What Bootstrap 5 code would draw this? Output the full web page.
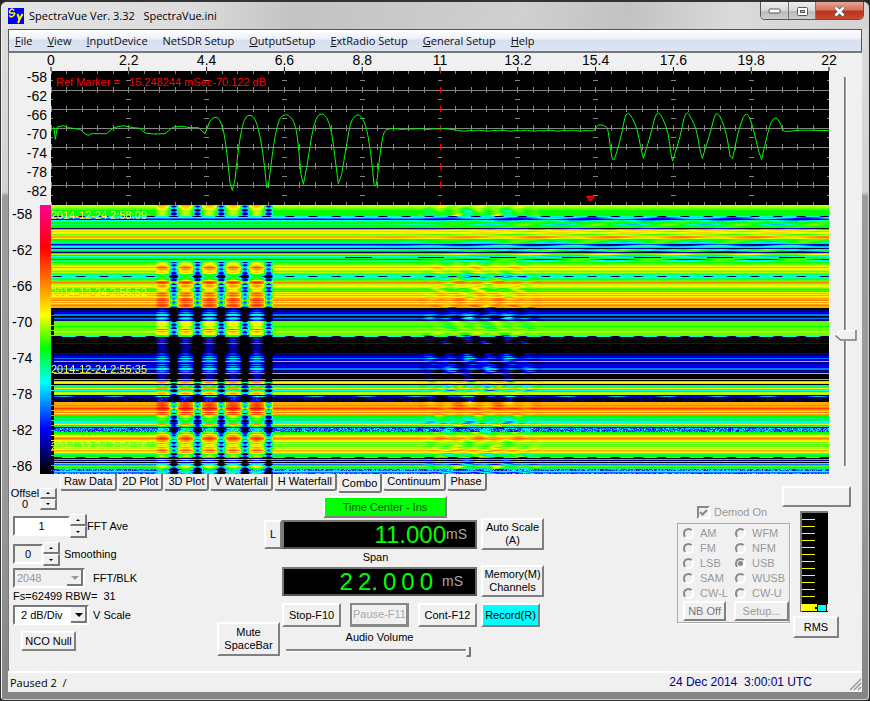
<!DOCTYPE html>
<html lang="en">
<head>
<meta charset="utf-8">
<meta name="viewport" content="width=device-width, initial-scale=1">
<title>SpectraVue Ver. 3.32 SpectraVue.ini</title>
<link href="https://cdn.jsdelivr.net/npm/bootstrap@5.3.0/dist/css/bootstrap.min.css" rel="stylesheet">
<style>
  body { font: 11px/13px "Liberation Sans", Arial, sans-serif; color: #000; background: #222; }
  .win { min-height: 100vh; padding: 0 7px 8px 7px; border: 1px solid #333; border-width: 2px 1px 1px; border-radius: 7px 7px 4px 4px; background: linear-gradient(#dedede 0, #d2d2d2 190px, #9c9c9c 194px, #9a9a9a 480px, #858585 100%); box-shadow: inset 1px 1px 0 #f4f4f4, inset -1px -1px 0 #ccc; }
  .ui-font { font-family: "Open Sans", "Noto Sans", sans-serif; font-size: 11px; }
  .titlebar { height: 27px; background: linear-gradient(100deg, #e4e4e4 0, #dcdcdc 22%, #c3c3c3 34%, #d0d0d0 60%, #c2c2c2 72%, #dadada 84%, #d4d4d4 100%); margin: 0 -6px; padding-left: 6px; border-radius: 6px 6px 0 0; }
  .caption-btns { border: 1px solid #555; border-top: 0; border-radius: 0 0 5px 5px; overflow: hidden; height: 18px; }
  .caption-btns button { border: 0; border-right: 1px solid #777; background: linear-gradient(#eee, #d8d8d8 48%, #b9b9b9 50%, #d0d0d0); padding: 0; height: 18px; width: 27px; display: flex; align-items: center; justify-content: center; }
  .caption-btns .first { width: 28px; }
  .caption-btns .shut { width: 47px; border-right: 0; background: linear-gradient(#e6a595, #d5705a 45%, #b9331a 50%, #c94a33); }
  .menubar { height: 22px; border: 1px solid #555; border-width: 1px 1px 0; background: linear-gradient(#fff, #eef1f9 40%, #d8dff1 50%, #dde4f4); padding-left: 6px; gap: 15px; }
  .menubar a { color: #111; text-decoration: none; white-space: nowrap; }
  .client { background: #f0f0f0; border-left: 1px solid #777; border-top: 2px solid #777; flex: 1 0 auto; }
  .gutter { width: 42px; flex: none; font-size: 14px; }
  .side { width: 33px; flex: none; }
  .axis-top { height: 18px; width: 100%; overflow: visible; font-size: 14px; display: block; }
  .lvl { line-height: 19px; height: 134px; margin-top: -3px; text-align: right; padding-right: 4px; }
  .lvl2 { line-height: 36px; height: 269px; margin-top: -9px; padding-left: 3px; width: 31px; }
  .lvl div, .lvl2 div { white-space: nowrap; }
  .scope { height: 134px; background: #000; }
  .scope svg, .fall canvas { display: block; width: 100%; height: 100%; }
  .readout { left: 5px; top: 5px; color: #f00; white-space: pre; }
  .fall { height: 269px; }
  .fall canvas { image-rendering: pixelated; }
  .stamp { left: 0; font-size: 11px; color: #ff4; white-space: nowrap; line-height: 12px; }
  .stamp.faint { color: #e8ff30; }
  .palette { width: 11px; height: 269px; background: linear-gradient(#ff0096, #f00 16%, #ff8000 29%, #ff0 41%, #0f0 53%, #0ff 66%, #00f 83%, #000 99%); }
  .vslide { writing-mode: vertical-lr; appearance: none; background: none; width: 24px; height: 389px; margin: 8px 0 0 4px; }
  .vslide::-webkit-slider-runnable-track { width: 3px; height: 100%; background: #999; border-left: 1px solid #777; border-right: 1px solid #fff; }
  .vslide::-webkit-slider-thumb { appearance: none; width: 22px; height: 11px; margin-left: -10px; background: url("data:image/svg+xml,%3Csvg xmlns='http://www.w3.org/2000/svg' width='22' height='11'%3E%3Cpath d='M1 5L6 .5H21.500V10.500H6Z' fill='%23f0f0f0' stroke='%23fff'/%3E%3Cpath d='M.5 5.500L5.500 10H21V0' fill='none' stroke='%23777' stroke-width='1.500'/%3E%3C/svg%3E"); }
  .hslide { appearance: none; background: none; width: 185px; height: 12px; margin: 0; padding: 0; display: block; }
  .hslide::-webkit-slider-runnable-track { height: 3px; background: #888; border-bottom: 1px solid #fff; }
  .hslide::-webkit-slider-thumb { appearance: none; width: 5px; height: 10px; margin-top: -2px; background: #f0f0f0; border: 1px solid #777; border-width: 0 2px 2px 1px; border-left-color: #fff; }
  .panel { display: grid; grid-template-columns: 208px 324px 1fr; }
  .panel > * { grid-row: 1; }
  .view-tabs { grid-column: 1 / -1; align-self: start; justify-self: start; margin-left: 51px; gap: 1px; --bs-nav-link-padding-x: 3px; --bs-nav-link-padding-y: 0; z-index: 1; }
  .view-tabs .nav-link { font-size: 11px; line-height: 15px; color: #000; height: 17px; background: #f0f0f0; border: 1px solid; border-color: #f0f0f0 #777 #777 #fff; border-width: 0 2px 2px 1px; border-radius: 0 0 3px 3px; white-space: nowrap; }
  .view-tabs .nav-link.active { height: 19px; line-height: 19px; color: #000; }
  .btn-cls, .btn-cls:hover { --bs-btn-border-radius: 0; --bs-btn-padding-x: 1px; --bs-btn-padding-y: 0; --bs-btn-font-size: 11px; --bs-btn-line-height: 13px; --bs-btn-color: #000; --bs-btn-hover-color: #000; --bs-btn-disabled-color: #999; --bs-btn-disabled-opacity: 1; background: #f0f0f0; border: 2px solid; border-color: #fff #808080 #808080 #fff; white-space: nowrap; }
  .btn-cls:disabled { background: #f0f0f0; border-color: #fff #808080 #808080 #fff; }
  .btn-cls.ring { border: 2px solid #888; border-right-width: 3px; border-bottom-width: 3px; color: #aaa; }
  .btn-cls.go { background: #0f0; color: #050; }
  .btn-cls.rec { background: #0ff; width: 59px; }
  .w59 { width: 59px; } .w63 { width: 63px; } .h23 { height: 24px; } .h31 { height: 32px; }
  .left-col { grid-column: 1; padding: 14px 0 0 4px; }
  .offset-row { margin-left: -3px; }
  .fieldrow { height: 24px; }
  .box-in { border: 2px solid; border-color: #777 #fff #fff #777; background: #fff; border-radius: 0; padding: 0; height: 20px; font: 11px/16px "Liberation Sans", Arial, sans-serif; color: #000; }
  select.box-in { appearance: none; padding: 0 20px 0 6px; background: #fff url("data:image/svg+xml,%3Csvg xmlns='http://www.w3.org/2000/svg' width='16' height='16'%3E%3Cpath d='M0 0H16V16H0Z' fill='%23f0f0f0'/%3E%3Cpath d='M15 0V15H0' fill='none' stroke='%23777' stroke-width='2'/%3E%3Cpath d='M4 6H12L8 10Z'/%3E%3C/svg%3E") right center no-repeat; }
  select.box-in:disabled { color: #999; opacity: 1; padding-left: 2px; background: #f0f0f0 url("data:image/svg+xml,%3Csvg xmlns='http://www.w3.org/2000/svg' width='16' height='16'%3E%3Cpath d='M0 0H16V16H0Z' fill='%23f0f0f0'/%3E%3Cpath d='M15 0V15H0' fill='none' stroke='%23777' stroke-width='2'/%3E%3Cpath d='M4 6H12L8 10Z' fill='%23999'/%3E%3C/svg%3E") right center no-repeat; }
  .spin { width: 17px; flex: none; }
  .spin button { display: flex; align-items: center; justify-content: center; height: 11px; width: 17px; padding: 0; border: 1px solid; border-color: #fff #777 #777 #fff; border-width: 1px 2px 2px 1px; background: #f0f0f0; }
  .spin button::before { content: ""; border: 2px solid transparent; border-top: 0; border-bottom-color: #000; }
  .spin button:last-child::before { border: 2px solid transparent; border-bottom: 0; border-top-color: #000; }
  .fieldrow .spin button { height: 12px; }
  .mid-col { grid-column: 2; display: grid; grid-template-columns: 65px 199px 63px; grid-template-rows: 22px 32px 15px 32px 6px 24px 29px; margin-top: 22px; align-content: start; width: 328px; }
  .lcd { width: 195px; height: 29px; background: #000; border: 2px solid; border-color: #777 #666 #555 #777; color: #0f0; font-size: 24px; line-height: 25px; }
  .lcd small { font-size: 14px; color: #aaa; }
  .right-col { grid-column: 3; display: grid; grid-template-columns: 105px 69px; justify-content: end; padding: 12px 11px 0 0; align-items: start; }
  .mode-box { width: 113px; border: 1px solid #aaa; box-shadow: 1px 1px 0 #fff; padding: 2px 0 1px 5px; color: #999; }
  .mode-box .modes { display: grid; grid-template-columns: 52px 54px; grid-auto-rows: 15px; }
  .opt { height: 15px; gap: 6px; color: #999; white-space: nowrap; }
  .opt input { appearance: none; margin: 0; width: 11px; height: 11px; border-radius: 50%; border: 2px solid; border-color: #888 #fff #fff #888; background: #f0f0f0; }
  .opt input:checked { background: radial-gradient(#888 0 2px, #f0f0f0 3px); }
  .tick { appearance: none; margin: 0; width: 13px; height: 13px; border: 2px solid; border-color: #888 #fff #fff #888; background: url("data:image/svg+xml,%3Csvg xmlns='http://www.w3.org/2000/svg' width='9' height='9'%3E%3Cpath d='M1 4L3.500 6.500L8 2' fill='none' stroke='%23888' stroke-width='2'/%3E%3C/svg%3E") center no-repeat; }
  .status { height: 21px; background: #f0f0f0; border-top: 2px solid #fff; padding-left: 2px; }
  .status .clock { font-size: 12px; color: #000080; white-space: pre; margin-right: 36px; }
</style>
</head>
<body>
<div class="win d-flex flex-column">
  <header class="titlebar d-flex justify-content-between">
    <div class="d-flex align-items-center ui-font gap-1">
      <svg width="17" height="16" viewBox="0 0 17 16" aria-hidden="true"><rect width="16" height="16" fill="#00f"/><path d="M6 2.500Q4-.500 2 2.500T4.500 5 4.500 8.500Q2 9.500 1.500 7" fill="none" stroke="#ff0" stroke-width="1.500"/><path d="M9.500 6L11.500 11.500 14.500 6M11.500 11.500L10 15" fill="none" stroke="#ff0" stroke-width="2"/></svg>
      <span class="text-nowrap">SpectraVue Ver. 3.32&nbsp;&nbsp; SpectraVue.ini</span>
    </div>
    <div class="caption-btns d-flex me-1">
      <button class="first" aria-label="Minimize"><svg width="14" height="7"><rect x="1" y="1" width="11" height="4" rx="1" fill="#fff" stroke="#556"/></svg></button>
      <button aria-label="Maximize"><svg width="13" height="11"><rect x="1.500" y="1.500" width="10" height="8" rx="1" fill="#fff" stroke="#556"/><rect x="4.500" y="4.500" width="4" height="2" fill="#bbb" stroke="#556"/></svg></button>
      <button class="shut" aria-label="Close"><svg width="13" height="11"><path d="M2.500 1.500L10.500 9.500M10.500 1.500L2.500 9.500" stroke="#556" stroke-width="4"/><path d="M2.500 1.500L10.500 9.500M10.500 1.500L2.500 9.500" stroke="#fff" stroke-width="2.500"/></svg></button>
    </div>
  </header>
  <nav class="menubar d-flex align-items-center ui-font">
    <a href="#"><u>F</u>ile</a><a href="#"><u>V</u>iew</a><a href="#"><u>I</u>nputDevice</a><a href="#">NetSDR Setup</a><a href="#"><u>O</u>utputSetup</a><a href="#"><u>E</u>xtRadio Setup</a><a href="#"><u>G</u>eneral Setup</a><a href="#"><u>H</u>elp</a>
  </nav>
  <main class="client">
    <div class="d-flex">
      <div class="flex-grow-1">
        <div class="d-flex"><div class="gutter"></div><div class="flex-grow-1"><svg class="axis-top" id="axisTop"></svg></div></div>
        <div class="d-flex">
          <div class="gutter lvl"><div>-58</div><div>-62</div><div>-66</div><div>-70</div><div>-74</div><div>-78</div><div>-82</div></div>
          <div class="flex-grow-1 scope position-relative">
            <svg viewBox="153 210 2334 402" preserveAspectRatio="none">
              <path id="gridLines" stroke="#858585" fill="none" stroke-width="3" shape-rendering="crispEdges"/>
              <path id="centerTicks" stroke="#f00" fill="none" stroke-width="3" shape-rendering="crispEdges"/>
              <path id="trace" fill="none" stroke="#0f0" stroke-width="3" stroke-linejoin="round"/>
              <path d="M1757 586L1764 584H1778L1785 587L1771 602Z" fill="#f00"/><path d="M1768 590H1774L1771 594Z"/>
            </svg>
            <div class="readout position-absolute">Ref Marker =   15.248244 mSec-70.122 dB</div>
          </div>
        </div>
        <div class="d-flex">
          <div class="gutter d-flex"><div class="lvl2"><div>-58</div><div>-62</div><div>-66</div><div>-70</div><div>-74</div><div>-78</div><div>-82</div><div>-86</div></div><div class="palette"></div></div>
          <div class="flex-grow-1 fall position-relative">
            <canvas id="waterfall" width="778" height="269"></canvas>
            <div class="stamp position-absolute" style="top:4px">2014-12-24 2:58:09</div>
            <div class="stamp faint position-absolute" style="top:81px">2014-12-24 2:56:52</div>
            <div class="stamp position-absolute" style="top:158px">2014-12-24 2:55:35</div>
            <div class="stamp faint position-absolute" style="top:235px">2014-12-24 2:54:18</div>
          </div>
        </div>
      </div>
      <div class="side pt-3"><input class="vslide" type="range" min="0" max="100" value="67" aria-label="Level"></div>
    </div>
    <div class="panel">
      <nav class="view-tabs nav"><a class="nav-link" href="#">Raw Data</a><a class="nav-link" href="#">2D Plot</a><a class="nav-link" href="#">3D Plot</a><a class="nav-link" href="#">V Waterfall</a><a class="nav-link" href="#">H Waterfall</a><a class="nav-link active" href="#">Combo</a><a class="nav-link" href="#">Continuum</a><a class="nav-link" href="#">Phase</a></nav>
      <div class="left-col">
        <div class="offset-row d-flex align-items-center"><div class="text-center" style="width:30px;line-height:11px">Offsel<br>0</div><div class="spin"><button aria-label="Offset up"></button><button aria-label="Offset down"></button></div></div>
        <div class="fieldrow d-flex align-items-center mt-1"><input class="box-in text-center" id="fa" value="1" style="width:57px"><div class="spin"><button aria-label="Average up"></button><button aria-label="Average down"></button></div><label for="fa" class="text-nowrap">FFT Ave</label></div>
        <div class="fieldrow d-flex align-items-center mt-1"><input class="box-in text-center bg-transparent" id="sm" value="0" style="width:30px"><div class="spin"><button aria-label="Smoothing up"></button><button aria-label="Smoothing down"></button></div><label for="sm" class="ms-1">Smoothing</label></div>
        <div class="fieldrow d-flex align-items-center"><select class="box-in" id="blk" disabled style="width:72px"><option>2048</option></select><label for="blk" class="ms-2">FFT/BLK</label></div>
        <div class="text-nowrap">Fs=62499 RBW=&nbsp; 31</div>
        <div class="fieldrow d-flex align-items-center"><select class="box-in" id="vs" style="width:76px"><option>2 dB/Div</option></select><label for="vs" class="ms-1">V Scale</label></div>
        <button class="btn btn-cls mt-1 ms-2" style="width:55px;height:20px">NCO Null</button>
      </div>
      <div class="mid-col">
        <button class="btn btn-cls go" style="grid-area:1/2;width:124px;margin-left:41px">Time Center - Ins</button>
        <button class="btn btn-cls" style="grid-area:2/1;width:18px;height:29px;justify-self:end;align-self:center">L</button>
        <div class="lcd d-flex justify-content-end align-items-center pe-2 align-self-center" style="grid-area:2/2">11.000<small>mS</small></div>
        <button class="btn btn-cls w63 h31" style="grid-area:2/3">Auto Scale<br>(A)</button>
        <div class="text-center align-self-center" style="grid-area:3/2;width:187px">Span</div>
        <div class="lcd d-flex justify-content-end align-items-center align-self-center pe-2" style="grid-area:4/2;gap:5px"><span>2</span><span>2.</span><span>0</span><span>0</span><span>0</span><small class="px-1">mS</small></div>
        <button class="btn btn-cls w63 h31" style="grid-area:4/3">Memory(M)<br>Channels</button>
        <div class="d-flex justify-content-between" style="grid-area:6/2;width:195px"><button class="btn btn-cls w59 h23">Stop-F10</button><button class="btn btn-cls ring w59 h23" disabled>Pause-F11</button><button class="btn btn-cls w59 h23">Cont-F12</button></div>
        <button class="btn btn-cls rec h23" style="grid-area:6/3">Record(R)</button>
        <button class="btn btn-cls w63" style="grid-area:6/1/8/2;height:34px;align-self:end">Mute<br>SpaceBar</button>
        <div class="ps-1 pt-1" style="grid-area:7/2"><label for="vol" class="d-block text-center" style="width:187px">Audio Volume</label><input id="vol" type="range" class="hslide" value="100"></div>
      </div>
      <div class="right-col">
        <div class="pt-3">
          <div class="d-flex align-items-center gap-1 mt-1 mb-1 ps-3 ms-1" style="color:#999"><input type="checkbox" id="dm" class="tick" checked disabled><label for="dm">Demod On</label></div>
          <div class="mode-box">
            <div class="modes" id="modes"></div>
            <div class="d-flex gap-2"><button class="btn btn-cls" disabled style="width:44px;height:20px;color:#777">NB Off</button><button class="btn btn-cls" disabled style="width:56px;height:20px">Setup...</button></div>
          </div>
        </div>
        <div>
          <button class="btn btn-cls d-block w-100" style="height:21px" aria-label="Reserved"></button>
          <svg class="d-block my-1" style="margin-left:18px" width="29" height="101" shape-rendering="crispEdges"><path fill="#000" d="M0 0H28V101H0Z"/><path stroke="#777" stroke-width="2" fill="none" d="M1 101V1H28"/><path fill="#ff0" d="M2 8H15V9H2ZM2 15H15V16H2ZM2 22H15V23H2ZM2 29H15V30H2ZM2 36H15V37H2ZM2 43H15V44H2ZM2 50H15V51H2ZM2 57H15V58H2ZM2 64H15V65H2ZM2 71H15V72H2ZM2 78H15V79H2ZM2 85H15V86H2Z"/><path fill="#ff0" d="M1 93H28V100H1Z"/><path d="M15 96H18V98H15Z"/><path fill="#000" d="M17 93H27V101H17Z"/><path fill="#0ff" d="M18 94H26V100H18Z"/></svg>
          <button class="btn btn-cls d-block" style="width:46px;height:22px;margin-left:11px">RMS</button>
        </div>
      </div>
    </div>
  </main>
  <footer class="status d-flex align-items-center justify-content-between">
    <span class="ui-font">Paused 2&nbsp; /</span>
    <div class="d-flex align-items-center"><span class="clock">24 Dec 2014  3:00:01 UTC</span><svg width="14" height="16"><path d="M2 15L13 4M6 15L13 8M10 15L13 12" stroke="#999" stroke-width="1.500"/></svg></div>
  </footer>
</div>
<script src="https://cdn.jsdelivr.net/npm/bootstrap@5.3.0/dist/js/bootstrap.bundle.min.js"></script>
<script>
// Time axis: eleven labels with a tick under each
document.getElementById('axisTop').innerHTML = ['0','2.2','4.4','6.6','8.8','11','13.2','15.4','17.6','19.8','22'].map((s, i) =>
  `<text x="${i*10}%" y="12" text-anchor="middle">${s}</text><line x1="${i*10}%" x2="${i*10}%" y1="14" y2="18" stroke="#000"/>`).join('');

// Scope grid
let g = '', c = '';
for (let y = 268; y < 560; y += 57) g += `M153 ${y}H2487`;
for (let k = 0; k <= 50; k++) {
  const x = 153 + k * 46.68;
  let s = `M${x} 210V219M${x} 603V612`;
  for (let y = 268; y < 560; y += 57) s += `M${x} ${y-9}V${y+9}`;
  if (k === 25) c += s; else g += s;
  if (k % 5 === 0) for (let y = 238; y < 600; y += 57.5) g += `M${x-7} ${y}H${x+7}`;
}
document.getElementById('gridLines').setAttribute('d', g);
document.getElementById('centerTicks').setAttribute('d', c);

// Scope trace: two bursts on a flat noise floor
const a = [153,385,162,380,166,415,172,378,190,374,205,380,240,385,255,398,265,403,275,398,320,398,340,380,370,374,400,380,420,382,435,396,460,399,495,398,520,378,545,376,570,380,595,380,615,398,622,380,630,358,642,348,655,350,664,368,672,395,680,450,690,545,697,568,705,535,715,440,728,370,738,346,750,342,762,347,775,380,790,460,800,560,806,550,820,430,835,360,848,342,865,340,882,360,892,400,903,520,910,550,920,500,935,400,948,350,963,336,980,345,995,390,1005,470,1015,548,1025,520,1040,430,1052,360,1070,339,1085,345,1100,380,1113,460,1122,550,1128,555,1132,530,1142,440,1152,390,1165,384];
const b = [60,387,480,388,484,376,495,370,515,376,520,390,526,440,532,475,538,475,545,455,560,400,570,345,580,334,592,350,607,385,617,440,625,472,635,440,650,390,660,345,670,332,683,350,700,395,708,460,713,480,720,455,735,410,748,345,757,332,768,350,785,385,795,450,802,472,815,430,830,380,838,345,847,334,860,355,875,400,885,465,893,472,905,410,920,360,930,338,940,340,955,380,970,450,980,475,990,430,1005,370,1015,352,1027,350,1038,372,1045,392,1060,391,1100,387,1140,388,1182,389];
const pts = [];
for (let i = 0; i < a.length; i += 2) pts.push([a[i], a[i+1]]);
for (let x = 1180, i = 0; x < 1360; x += 15, i++) pts.push([x, 384 + (i*7%5) - 2]);
for (let x = 1366, j = 0; x < 1780; x += 14, j++) pts.push([x, 389 + (j*7%5) - 2]);
for (let i = 2; i < b.length; i += 2) pts.push([1305 + b[i], b[i+1]]);
// Quadratic segments through the midpoints round off the crests
let d = `M${pts[0]}`;
for (let i = 1; i < pts.length - 1; i++) {
  const p = pts[i], q = pts[i+1], sharp = p[1] > 460 || p[0] < 620;
  d += sharp ? `L${p}` : `Q${p} ${(p[0]+q[0])/2},${(p[1]+q[1])/2}`;
}
document.getElementById('trace').setAttribute('d', d + `L${pts[pts.length-1]}`);

// Waterfall: one letter per scan line gives its base level on the colour scale
const level = {R:.22,o:.29,O:.33,y:.4,Y:.45,L:.485,G:.53,A:.59,C:.66,b:.75,B:.84,N:.91,K:1,d:.63,D:.58,e:.85,n:.97,m:.75};
const lines = 'yYYLLGGGGGGd' + 'CbNCAGGAGGGNA' + 'yYyyLYOOyGGAAG' + 'BbCGNAAbNGYGCDGbA' + 'LGLLYyOyyYLYLACdCAALOoO' + 'YyyYLGLGyOyOyYOOoyOyOoO' +
  'CKKNKBNbbKBbBN' + 'LLLLLGLLOLyYLLCd' + 'KKNKNKBKKKKKKKKKNNKBNbNBC' + 'NKBKBNbbNBNCKKKKK' + 'AKCyYKAAAyACGYyY' + 'Kennnnn' +
  'OOOoOoRoOYoyO' + 'GGGAGACCCyGA' + 'Nmmmm' + 'GAL' + 'yyOoOyyLyLYLyYyOYyL' + 'AGG' + 'dKGNLKCbGLGAmmCbm';
const stops = [[0,255,0,150],[.16,255,0,0],[.29,255,128,0],[.41,255,255,0],[.53,0,255,0],[.66,0,255,255],[.83,0,0,255],[.98,0,0,0],[1.01,0,0,0]];
function colour(t) {
  t = Math.min(1, Math.max(0, t));
  let i = 1; while (stops[i][0] < t) i++;
  const p = stops[i-1], q = stops[i], f = (t - p[0]) / (q[0] - p[0]);
  return [1,2,3].map(n => p[n] + (q[n] - p[n]) * f);
}
let seed = 7;
const rnd = () => (seed = (seed * 16807) % 2147483647) / 2147483647;
const ctx = document.getElementById('waterfall').getContext('2d'), img = ctx.createImageData(778, 269);
for (let r = 0; r < 269; r++) {
  const ch = lines[r] || 'G', base = level[ch], dark = base > .7;
  const rowAmp = rnd(), rowPhase = rnd() * 2.4;
  for (let x = 0; x < 778; x++) {
    let t = base;
    if (ch === 'd') t += Math.max(0, Math.sin(x / 3.7)) * .38;
    if (ch === 'e') t -= Math.max(0, Math.sin(x / 8)) * .15;
    if (ch === 'D') t += x > 250 && Math.sin(x / 11.5) > .4 ? .4 : 0;
    if (ch === 'n') t += rnd() * .14 - .09;
    if (ch === 'm') t += rnd() * .2 - .1;
    // slow ripple in the upper lines
    if (r >= 12 && r < 56 && x > 300) t += Math.sin(x / 11.5 + r * .4) * (base > .55 ? .09 : .035) * Math.min(1, (x - 300) / 160) * (.4 + rowAmp);
    const burst = r < 11 || r > 56;
    // left burst: five hot pulses split by deep nulls
    if (burst && x > 104 && x < 222) {
      const ph = (x - 110.5) / 23.7, near = Math.abs(ph - Math.round(ph));
      if (near < .3 || x < 110) t -= (dark ? .12 : .09) * Math.cos(Math.min(near, .3) * 5);
      else t += (.34 + .12 * Math.sin(r * 1.7)) * Math.sin((near - .3) / .2 * 1.57);
    }
    // middle burst: short broken dashes
    if (burst && x > 366 && x < 492 && !(r > 138 && r < 148)) {
      const env = Math.sin((x - 366) / 126 * Math.PI);
      const w = Math.sin(x / 3.15 + rowPhase) * .6 + Math.sin(x / 6.3 - r * .3) * .5;
      t += (dark ? -.13 : base > .5 ? .1 : .05) * (.4 + rowAmp) * Math.sqrt(env) * w;
    }
    if (r > 102 && x < 3 && (r * 7) % 5) t = .98;
    const k = (r * 778 + x) * 4, rgb = colour(t);
    img.data[k] = rgb[0]; img.data[k+1] = rgb[1]; img.data[k+2] = rgb[2]; img.data[k+3] = 255;
  }
}
ctx.putImageData(img, 0, 0);

// Demodulation modes
document.getElementById('modes').innerHTML = ['AM','WFM','FM','NFM','LSB','USB','SAM','WUSB','CW-L','CW-U'].map(m =>
  `<label class="opt d-flex align-items-center"><input type="radio" name="mode" disabled ${m === 'USB' ? 'checked' : ''}>${m}</label>`).join('');
</script>
</body>
</html>
